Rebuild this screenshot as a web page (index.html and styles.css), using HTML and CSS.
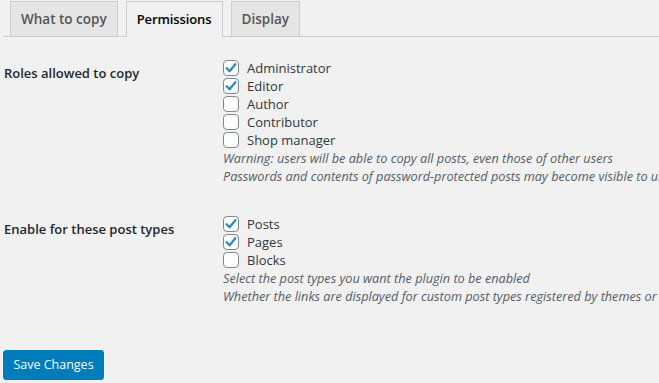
FILE: index.html
```html
<!DOCTYPE html>
<html>
<head>
<meta charset="utf-8">
<link rel="stylesheet" href="styles.css">
</head>
<body>
<div class="wrap">
  <nav class="tabs">
    <a class="tab">What to copy</a>
    <a class="tab active">Permissions</a>
    <a class="tab">Display</a>
  </nav>

  <section class="row first">
    <div class="label">Roles allowed to copy</div>
    <div class="field">
      <label class="check"><span class="box on"><svg viewBox="0 0 16 16"><path d="M3.6 8.2l3 3.1 5.8-7.2"/></svg></span>Administrator</label>
      <label class="check"><span class="box on"><svg viewBox="0 0 16 16"><path d="M3.6 8.2l3 3.1 5.8-7.2"/></svg></span>Editor</label>
      <label class="check"><span class="box"></span>Author</label>
      <label class="check"><span class="box"></span>Contributor</label>
      <label class="check"><span class="box"></span>Shop manager</label>
      <p class="desc">Warning: users will be able to copy all posts, even those of other users</p>
      <p class="desc">Passwords and contents of password-protected posts may become visible to undesired users and visitors</p>
    </div>
  </section>

  <section class="row second">
    <div class="label">Enable for these post types</div>
    <div class="field">
      <label class="check"><span class="box on"><svg viewBox="0 0 16 16"><path d="M3.6 8.2l3 3.1 5.8-7.2"/></svg></span>Posts</label>
      <label class="check"><span class="box on"><svg viewBox="0 0 16 16"><path d="M3.6 8.2l3 3.1 5.8-7.2"/></svg></span>Pages</label>
      <label class="check"><span class="box"></span>Blocks</label>
      <p class="desc">Select the post types you want the plugin to be enabled</p>
      <p class="desc">Whether the links are displayed for custom post types registered by themes or plugins depends on their use of standard WordPress UI elements</p>
    </div>
  </section>

  <div class="actions">
    <button class="primary">Save Changes</button>
  </div>
</div>
</body>
</html>
```

FILE: styles.css
```css
html, body {
  margin: 0;
  padding: 0;
  background: #f1f1f1;
  overflow: hidden;
}
body {
  font-family: "Open Sans", "Noto Sans", sans-serif;
  font-size: 13px;
  color: #32373c;
  width: 659px;
  height: 383px;
}
.wrap {
  padding: 1px 0 0 3px;
  white-space: nowrap;
}
.tabs {
  display: flex;
  border-bottom: 1px solid #ccc;
  padding-left: 7px;
  gap: 8px;
  height: 35px;
}
.tab {
  display: block;
  box-sizing: border-box;
  height: 35px;
  padding: 0 10px;
  line-height: 34px;
  font-size: 13.5px;
  font-weight: 600;
  color: #555;
  background: #e5e5e5;
  border: 1px solid #ccc;
  border-bottom: none;
}
.tab.active {
  background: #f1f1f1;
  color: #000;
  height: 36px;
  font-size: 13px;
  letter-spacing: -0.1px;
}
.row {
  display: flex;
}
.row.first { margin-top: 22px; }
.row.second { margin-top: 30px; }
.label {
  width: 220px;
  flex: none;
  font-weight: 600;
  font-size: 13px;
  color: #23282d;
  line-height: 18px;
  padding-top: 5px;
  padding-left: 1px;
  margin-right: -1px;
}
.field {
  display: flex;
  flex-direction: column;
}
.check {
  display: flex;
  align-items: center;
  height: 18px;
  line-height: 18px;
  color: #32373c;
}
.box {
  box-sizing: border-box;
  width: 16px;
  height: 16px;
  margin-right: 8px;
  border: 1px solid #7e8993;
  border-radius: 4px;
  background: #fff;
  display: flex;
  align-items: center;
  justify-content: center;
}
.box svg {
  width: 16px;
  height: 16px;
  flex: none;
}
.box svg path {
  fill: none;
  stroke: #1e8cbe;
  stroke-width: 2.2;
  stroke-linecap: round;
  stroke-linejoin: round;
}
.desc {
  margin: 0;
  height: 18px;
  line-height: 18px;
  font-style: italic;
  font-size: 12.7px;
  color: #555d66;
}
.actions {
  margin-top: 45px;
}
.primary {
  box-sizing: border-box;
  width: 101px;
  height: 30px;
  padding: 0;
  border: 1px solid #007cba;
  border-radius: 3px;
  background: #007cba;
  color: #fff;
  font-family: "Open Sans", "Noto Sans", sans-serif;
  font-size: 12.5px;
  line-height: 28px;
}
```
